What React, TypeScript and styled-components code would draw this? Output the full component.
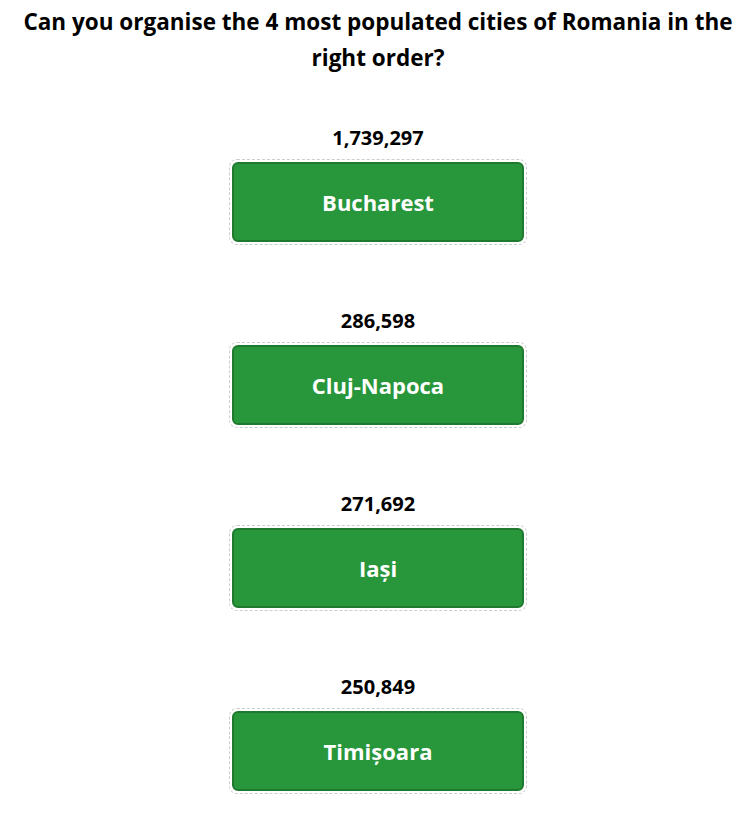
import React from 'react'
import styled, { createGlobalStyle } from 'styled-components'

const GlobalStyle = createGlobalStyle`
  body {
    margin: 0;
    background: #ffffff;
    font-family: "Open Sans", "Noto Sans", "Liberation Sans", sans-serif;
  }
`

const Page = styled.div`
  display: flex;
  flex-direction: column;
  align-items: center;
  padding: 0 8px 0 16px;
`

const Title = styled.h2`
  margin: 4px 0 0;
  font-size: 22.5px;
  line-height: 36px;
  font-weight: 700;
  color: #000;
  text-align: center;
`

const List = styled.div`
  display: flex;
  flex-direction: column;
  align-items: center;
  margin-top: 50px;
  gap: 64px;
`

const Item = styled.div`
  display: flex;
  flex-direction: column;
  align-items: center;
  gap: 9px;
`

const Population = styled.div`
  font-size: 20px;
  line-height: 24px;
  font-weight: 700;
  color: #000;
`

const DropZone = styled.div`
  box-sizing: border-box;
  width: 298px;
  height: 86px;
  padding: 2px;
  border: 1px dashed #c9cfc9;
  border-radius: 8px;
`

const CityButton = styled.div`
  box-sizing: border-box;
  height: 100%;
  display: flex;
  align-items: center;
  justify-content: center;
  background: #28963a;
  border: 2px solid #1f7a2f;
  border-radius: 6px;
  color: #fff;
  font-size: 22px;
  font-weight: 700;
`

const cities = [
  { name: 'Bucharest', population: '1,739,297' },
  { name: 'Cluj-Napoca', population: '286,598' },
  { name: 'Iași', population: '271,692' },
  { name: 'Timișoara', population: '250,849' },
]

export default function App() {
  return (
    <Page>
      <GlobalStyle />
      <Title>Can you organise the 4 most populated cities of Romania in the right order?</Title>
      <List>
        {cities.map((c) => (
          <Item key={c.name}>
            <Population>{c.population}</Population>
            <DropZone>
              <CityButton>{c.name}</CityButton>
            </DropZone>
          </Item>
        ))}
      </List>
    </Page>
  )
}
